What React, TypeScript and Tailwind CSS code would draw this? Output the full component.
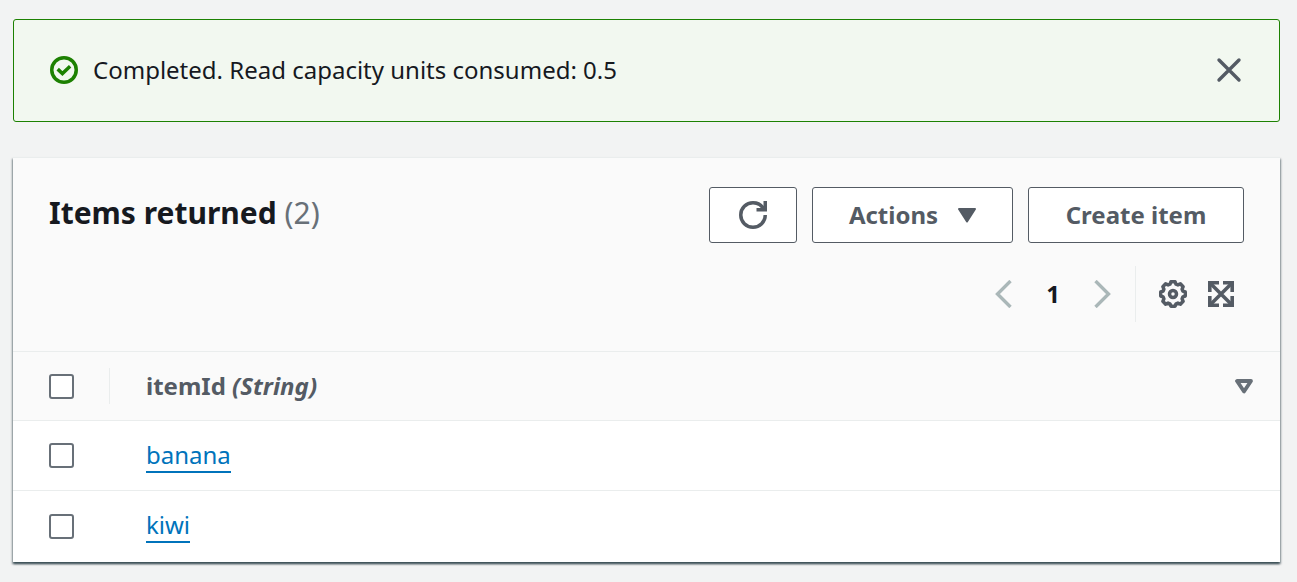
import { useState } from "react";

const items = [{ id: "banana" }, { id: "kiwi" }];

const checkboxClass =
  "block size-[25px] appearance-none rounded-[3px] border-2 border-[#687078] bg-white checked:border-[#0073bb] checked:bg-[#0073bb]";

const buttonClass =
  "flex h-14 items-center justify-center rounded-[3px] border border-[#545b64] bg-white text-2xl font-bold text-[#545b64]";

function SuccessIcon() {
  return (
    <svg viewBox="0 0 16 16" className="size-7" fill="none" stroke="#1d8102" strokeWidth="2" aria-hidden="true">
      <circle cx="8" cy="8" r="7" />
      <path d="M4.400 7.500 7.100 10l4.400-4.100" />
    </svg>
  );
}

function CloseIcon() {
  return (
    <svg viewBox="0 0 28 28" className="size-7" fill="none" stroke="#545b64" strokeWidth="3.4" strokeLinecap="round" aria-hidden="true">
      <path d="M4 4l20 20M24 4 4 24" />
    </svg>
  );
}

function RefreshIcon() {
  return (
    <svg viewBox="0 0 16 16" className="size-7" fill="none" stroke="#545b64" strokeWidth="2" aria-hidden="true">
      <path d="M15 8c0 3.87-3.13 7-7 7s-7-3.13-7-7 3.13-7 7-7c2.79 0 5.2 1.63 6.33 4" />
      <path d="M10 5h5V0" />
    </svg>
  );
}

function CaretIcon() {
  return (
    <svg viewBox="0 0 18 15" className="h-[15px] w-[18px]" fill="#545b64" stroke="#545b64" strokeWidth="2" strokeLinejoin="round" aria-hidden="true">
      <path d="M1 1h16L9 13.5z" />
    </svg>
  );
}

function SortIcon() {
  return (
    <svg viewBox="0 0 18 15" className="h-[15px] w-[18px]" fill="none" stroke="#687078" strokeWidth="3.8" strokeLinejoin="round" aria-hidden="true">
      <path d="M2 2h14L9 12.5z" />
    </svg>
  );
}

function Chevron({ d }: { d: string }) {
  return (
    <svg viewBox="0 0 17 28" className="h-7 w-[17px]" fill="none" stroke="#aab7b8" strokeWidth="3.4" aria-hidden="true">
      <path d={d} />
    </svg>
  );
}

function GearIcon() {
  return (
    <svg viewBox="0 0 16 16" className="size-7" fill="none" stroke="#545b64" strokeWidth="2" strokeLinejoin="round" aria-hidden="true">
      <path d="M6.8 1h2.4l.5 1.4 1.1.4 1.4-.6 1.6 1.6-.6 1.4.4 1.1 1.4.5v2.4l-1.4.5-.4 1.1.6 1.4-1.6 1.6-1.4-.6-1.1.4-.5 1.4H6.8l-.5-1.4-1.1-.4-1.4.6-1.6-1.6.6-1.4-.4-1.1L1 9.2V6.8l1.400-.5.4-1.100-.6-1.400 1.600-1.600 1.400.6 1.100-.4z" />
      <circle cx="8" cy="8" r="2" />
    </svg>
  );
}

function ExpandIcon() {
  return (
    <svg viewBox="0 0 26 26" className="size-[26px]" fill="none" stroke="#545b64" strokeWidth="3.6" aria-hidden="true">
      <path d="M1.800 11V1.800H11M15 1.800h9.200V11M24.200 15v9.200H15M11 24.200H1.800V15" />
      <path d="M2 2l22 22M24 2 2 24" />
    </svg>
  );
}

export default function App() {
  const [selected, setSelected] = useState<string[]>([]);
  const [dismissed, setDismissed] = useState(false);

  const toggle = (id: string) =>
    setSelected((now) => (now.includes(id) ? now.filter((x) => x !== id) : [...now, id]));

  return (
    <div className="flex min-h-screen flex-col gap-[35px] bg-[#f2f3f3] pt-[19px] pr-[17px] pb-5 pl-[13px] font-['Noto_Sans',sans-serif] text-[#16191f]">
      {!dismissed && (
        <div role="status" className="flex items-center rounded-[3px] border border-[#1d8102] bg-[#f2f8f0] px-9 pt-[31px] pb-[33px]">
          <SuccessIcon />
          <p className="ml-[15px] flex-1 text-2xl leading-[37px]">Completed. Read capacity units consumed: 0.5</p>
          <button type="button" aria-label="Dismiss" onClick={() => setDismissed(true)}>
            <CloseIcon />
          </button>
        </div>
      )}

      <section className="border-t border-[#eaeded] bg-white shadow-[0_2px_2px_0_rgba(0,28,36,0.5),1px_2px_2px_0_rgba(0,28,36,0.3),-1px_2px_2px_0_rgba(0,28,36,0.3)]">
        <header className="bg-[#fafafa] px-9 pt-[29px] pb-[29px]">
          <div className="flex items-start justify-between">
            <h2 className="pt-[6px] text-[30px] leading-10 font-bold">
              Items returned <span className="font-normal text-[#687078]">(2)</span>
            </h2>
            <div className="flex gap-[15px]">
              <button type="button" aria-label="Refresh" className={`${buttonClass} w-[88px]`}>
                <RefreshIcon />
              </button>
              <button type="button" className={`${buttonClass} w-[201px] gap-5`}>
                Actions
                <CaretIcon />
              </button>
              <button type="button" className={`${buttonClass} w-[216px]`}>
                Create item
              </button>
            </div>
          </div>
          <div className="mt-[23px] flex h-14 items-center justify-end">
            <nav aria-label="Pagination" className="flex items-center">
              <button type="button" aria-label="Previous page">
                <Chevron d="M15.500 1 2.500 14l13 13" />
              </button>
              <button type="button" aria-current="page" className="w-[82px] text-2xl font-bold">
                1
              </button>
              <button type="button" aria-label="Next page">
                <Chevron d="M1.500 1l13 13-13 13" />
              </button>
            </nav>
            <div className="ml-6 flex h-14 items-center gap-[21px] border-l border-[#eaeded] pr-[10px] pl-[23px]">
              <button type="button" aria-label="Preferences">
                <GearIcon />
              </button>
              <button type="button" aria-label="Full screen">
                <ExpandIcon />
              </button>
            </div>
          </div>
        </header>

        <table className="w-full border-collapse text-left text-2xl">
          <thead>
            <tr className="h-[69px] border-y border-[#eaeded] bg-[#fafafa] text-[#545b64]">
              <th scope="col" className="w-[97px] p-0">
                <div className="flex h-9 items-center border-r border-[#eaeded] pl-9">
                  <input
                    type="checkbox"
                    aria-label="Select all items"
                    className={checkboxClass}
                    checked={selected.length === items.length}
                    onChange={(e) => setSelected(e.target.checked ? items.map((i) => i.id) : [])}
                  />
                </div>
              </th>
              <th scope="col" className="py-0 pr-[27px] pl-9">
                <button type="button" className="flex w-full items-center justify-between">
                  <span>
                    itemId <em>(String)</em>
                  </span>
                  <SortIcon />
                </button>
              </th>
            </tr>
          </thead>
          <tbody>
            {items.map((item) => (
              <tr key={item.id} className="h-[70px] border-b border-[#eaeded] last:h-[71px] last:border-b-0">
                <td className="p-0 pl-9">
                  <input
                    type="checkbox"
                    aria-label={`Select ${item.id}`}
                    className={checkboxClass}
                    checked={selected.includes(item.id)}
                    onChange={() => toggle(item.id)}
                  />
                </td>
                <td className="py-0 pl-9">
                  <a href={`#${item.id}`} className="inline-block border-b-2 border-[#0073bb] leading-8 text-[#0073bb]">
                    {item.id}
                  </a>
                </td>
              </tr>
            ))}
          </tbody>
        </table>
      </section>
    </div>
  );
}
